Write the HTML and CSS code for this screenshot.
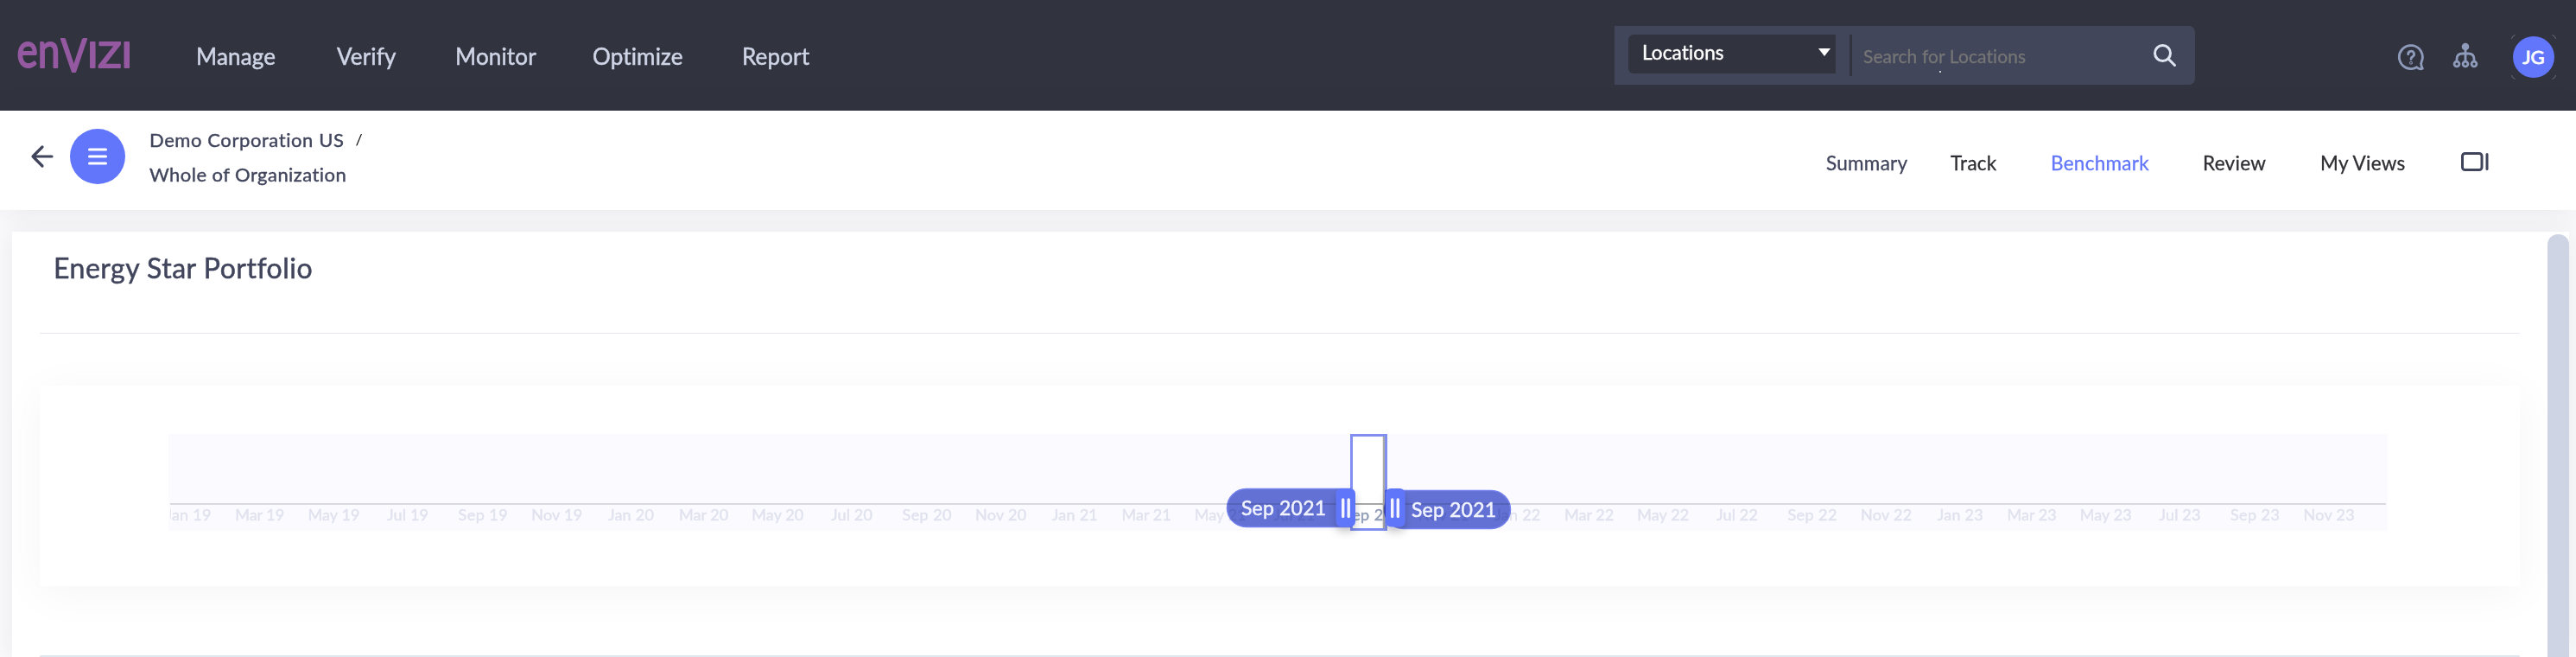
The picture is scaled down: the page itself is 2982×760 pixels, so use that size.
FILE: index.html
```html
<!DOCTYPE html>
<html lang="en">
<head>
<meta charset="utf-8">
<title>Envizi</title>
<link rel="stylesheet" href="styles.css">
</head>
<body>
<header class="topbar">
  <svg class="logo" width="140" height="60" viewBox="14 36 140 60" role="img">
    <text x="19.500" y="78" font-size="56" textLength="50" lengthAdjust="spacingAndGlyphs">en</text>
    <text x="70.500" y="82.500" font-size="53" textLength="30" lengthAdjust="spacingAndGlyphs">V</text>
    <text x="101" y="78" font-size="40" textLength="52" lengthAdjust="spacingAndGlyphs">IZI</text>
  </svg>
  <nav class="mainnav">
    <a>Manage</a><a>Verify</a><a>Monitor</a><a>Optimize</a><a>Report</a>
  </nav>
  <div class="search">
    <div class="select"><span>Locations</span><svg width="14" height="9" viewBox="0 0 14 9"><path d="M0 0h14L7 9z" fill="#fff"/></svg></div>
    <div class="divider"></div>
    <div class="query">Search for Locations<i class="speck"></i></div>
    <svg class="glass" width="28" height="28" viewBox="0 0 28 28" fill="none" stroke="#dfe4f0" stroke-width="3" stroke-linecap="round"><circle cx="11.500" cy="11.500" r="9"/><path d="M18 18l7.500 7.500"/></svg>
  </div>
  <div class="tools">
    <svg class="help" width="32" height="32" viewBox="0 0 32 32" fill="none" stroke="#8e9bba" stroke-width="2.800" stroke-linecap="round" stroke-linejoin="round"><path d="M22.500 27.800A13.500 13.500 0 1 1 28.200 21.500C27 24.500 28 27 29.300 29.200C27 30.500 24.500 29.500 22.500 27.800"/><path d="M12.700 12.800a3.400 3.400 0 1 1 5.200 2.700c-1.500 1-1.900 1.500-1.900 2.900"/><circle cx="16" cy="22.700" r=".5"/></svg>
    <svg class="tree" width="30" height="30" viewBox="0 0 30 30" fill="none" stroke="#8e9bba" stroke-width="2.800"><circle cx="15" cy="5" r="4.300" fill="#8e9bba" stroke="none"/><path d="M15 5v16M5 21v-1.500q0-6.500 6.500-6.500h7q6.500 0 6.500 6.500v1.500"/><g fill="#31333f"><circle cx="5" cy="25" r="2.900"/><circle cx="15" cy="25" r="2.900"/><circle cx="25" cy="25" r="2.900"/></g></svg>
    <div class="avatar">JG<svg class="corners" width="52" height="52" viewBox="0 0 52 52" fill="none" stroke="#6b6d78"><path d="M.5 5q0-3 4-4.500M47.500.5q4 1.500 4 4.500M51.500 47q0 3-4 4.500M4.500 51.500q-4-1.500-4-4.500"/></svg></div>
  </div>
</header>
<section class="subbar">
  <svg class="back" width="28" height="28" viewBox="0 0 28 28" fill="none" stroke="#41455c" stroke-width="3.200" stroke-linecap="round" stroke-linejoin="round"><path d="M25 14H3M14 3L3 14l11 11"/></svg>
  <button class="menu"><svg width="24" height="20" viewBox="0 0 24 20" stroke="#fff" stroke-width="3" stroke-linecap="round"><path d="M2.500 2h19M2.500 10h19M2.500 18h19"/></svg></button>
  <div class="crumbs"><div><span class="c1">Demo Corporation US</span><span class="slash">/</span></div><div><span class="c2">Whole of Organization</span></div></div>
  <nav class="tabs"><a class="navy">Summary</a><a>Track</a><a class="active">Benchmark</a><a>Review</a><a>My Views</a></nav>
  <svg class="panelicon" width="34" height="24" viewBox="0 0 34 24" fill="none" stroke="#41455c" stroke-width="3"><rect x="2.500" y="2.500" width="22.500" height="19" rx="3"/><path d="M31 3.500v17" stroke-linecap="round"/></svg>
</section>
<main class="panel">
  <div class="content">
    <h1>Energy Star Portfolio</h1>
    <div class="card">
      <svg class="timeline" width="2569" height="112" viewBox="195 502 2569 112">
        <defs>
          <clipPath id="plot"><rect x="197" y="502" width="2567" height="112"/></clipPath>
          <filter id="shadow" x="-60%" y="-40%" width="220%" height="190%"><feDropShadow dx="0" dy="6" stdDeviation="5" flood-color="#000" flood-opacity=".2"/></filter>
        </defs>
        <rect x="195" y="502" width="2569" height="112" fill="#fafaff"/>
        <path d="M197 583H2762" stroke="#d9d9e0" stroke-width="2"/>
        <g class="months" clip-path="url(#plot)" id="months"></g>
        <rect x="1564.500" y="503.500" width="39.500" height="109" fill="#fff"/>
        <path d="M1566 583H1602" stroke="#8a8a8a" stroke-width="1.500"/>
        <path d="M1602 505V611" stroke="#a9a9a9" stroke-width="2.500"/>
        <svg x="1569" y="585" width="32" height="26" viewBox="1569 585 32 26"><text class="inner" x="1583.500" y="601.500" textLength="57" text-anchor="middle">Sep 21</text></svg>
        <rect x="1564.500" y="503.500" width="40" height="109" fill="none" stroke="#8190f0" stroke-width="3"/>
        <g class="pill">
          <path d="M1563 565.500H1442.500a22 22 0 0 0 0 44H1563z"/>
          <path d="M1604 567.500H1726.500a22 22 0 0 1 0 44H1624.500a22 22 0 0 1-20.500-30z"/>
        </g>
        <g class="value"><text x="1437" y="596" textLength="98">Sep 2021</text><text x="1634" y="598" textLength="98">Sep 2021</text></g>
        <g filter="url(#shadow)" fill="#6176fa"><rect x="1546.700" y="565" width="22.300" height="44.500" rx="6"/><rect x="1604" y="565" width="22.500" height="44.500" rx="6"/></g>
        <path d="M1554.700 578v19.500M1561.200 578v19.500M1611.700 578v19.500M1618.300 578v19.500" stroke="#f4f5ff" stroke-width="3.400" stroke-linecap="round"/>
      </svg>
    </div>
    <div class="nextcard"></div>
  </div>
  <div class="track"><div class="thumb"></div></div>
</main>
<script src="timeline.js"></script>
</body>
</html>
```
FILE: styles.css
```css
* { box-sizing: border-box; }
body { margin: 0; height: 760px; overflow: hidden; background: #fafafc; font-family: Lato, "Noto Sans", sans-serif; display: flex; flex-direction: column; }
.topbar { height: 128px; flex: none; background: #31333f; display: flex; align-items: flex-start; }
.logo { margin: 36px 0 0 14px; flex: none; fill: #9459a0; stroke: #9459a0; stroke-width: 1.9; stroke-linejoin: round; overflow: visible; }
.mainnav { margin: 49px 0 0 73px; width: 1642px; display: grid; grid-template-columns: 163px 137px 159px 173px 1fr; font-size: 26px; line-height: 33px; letter-spacing: .15px; color: #cfd5e6; -webkit-text-stroke: .5px; }
.search { margin-top: 30px; width: 672px; height: 68px; background: #42465a; border-radius: 0 7px 7px 0; display: flex; padding: 10px 21px 0 16px; }
.select { width: 240px; height: 45px; background: #31333f; border-radius: 6px 0 0 6px; padding: 0 6px 4px 16px; display: flex; align-items: center; justify-content: space-between; color: #fff; font-size: 22.5px; line-height: 40px; letter-spacing: .1px; -webkit-text-stroke: .4px; }
.divider { width: 3px; height: 48px; background: #31333f; margin-left: 16px; }
.query { position: relative; margin: 11px 0 0 13px; width: 335px; color: #757575; font-size: 21px; line-height: 28px; letter-spacing: .1px; -webkit-text-stroke: .3px; }
.speck { position: absolute; left: 88px; top: 31px; width: 2px; height: 2px; background: #c9c9c9; }
.glass { margin-top: 10px; flex: none; }
.tools { margin-left: 234px; display: flex; }
.help { margin-top: 50px; }
.tree { margin: 49px 0 0 32px; }
.avatar { position: relative; margin: 42px 0 0 40px; width: 48px; height: 48px; border-radius: 50%; background: #6176fa; color: #fff; font-size: 22px; line-height: 48px; text-align: center; -webkit-text-stroke: .8px; }
.corners { position: absolute; left: -2px; top: -2px; }
.subbar { height: 115px; flex: none; position: relative; background: #fff; display: flex; align-items: flex-start; box-shadow: 0 0 30px rgba(40,42,60,.09); }
.back { margin: 39px 0 0 35px; }
.menu { margin: 21px 0 0 18px; width: 64px; height: 64px; border: 0; border-radius: 50%; background: #6176fa; padding: 0; display: flex; align-items: center; justify-content: center; }
.crumbs { margin: 14px 0 0 28px; width: 1941px; font-size: 22px; line-height: 39px; color: #41455c; -webkit-text-stroke: .4px; }
.c1 { letter-spacing: .58px; }
.c2 { letter-spacing: .45px; }
.crumbs div + div { margin-top: -1px; }
.slash { color: #111; font-size: 18px; margin-left: 13px; position: relative; top: -2px; -webkit-text-stroke: 0; }
.tabs { margin-top: 45px; width: 734px; display: grid; grid-template-columns: 144px 116px 176px 136px 1fr; font-size: 22.5px; line-height: 32px; letter-spacing: .28px; color: #2e2e33; -webkit-text-stroke: .3px; }
.tabs .navy { color: #41455c; }
.tabs .active { color: #6176fa; }
.panelicon { margin-top: 47px; }
.panel { margin: 25px 8px 0 14px; flex: 1; min-height: 0; background: #fff; display: flex; box-shadow: 0 0 30px rgba(40,42,60,.08); }
.content { width: 2935px; padding: 0 32px; display: flex; flex-direction: column; }
h1 { margin: 0; height: 118px; flex: none; padding: 21px 0 0 16px; border-bottom: 1px solid #e6e7f1; font-size: 32px; line-height: 42px; font-weight: 400; letter-spacing: .5px; color: #41455c; -webkit-text-stroke: .5px; }
.card { margin-top: 60px; height: 232px; flex: none; padding: 56px 149px; box-shadow: 0 8px 50px rgba(0,0,0,.045); }
.timeline { display: block; overflow: visible; }
.timeline text { font-size: 18px; }
.months text { fill: #e0e2ee; stroke: #e0e2ee; stroke-width: .4px; }
.timeline .inner { fill: #8d9ab6; stroke: #8d9ab6; stroke-width: .4px; }
.pill { mix-blend-mode: multiply; }
.pill path { fill: #6473d3; stroke: #7684ee; stroke-width: 1.5px; }
.timeline .value text { font-size: 23px; fill: #f1f3ff; stroke: #f1f3ff; stroke-width: .5px; }
.nextcard { margin-top: 80px; flex: 1; border: 2px solid #e1e7ee; border-bottom: 0; border-radius: 4px 4px 0 0; }
.track { width: 25px; padding-top: 3px; display: flex; }
.thumb { flex: 1; border-radius: 12px 12px 0 0; background: #ced4e3; }
```
FILE: timeline.js
```js
const names = ["Jan", "Mar", "May", "Jul", "Sep", "Nov"];
const widths = { Jan: 53, Mar: 57, May: 60, Jul: 48, Sep: 57, Nov: 59 };
const origin = Date.UTC(2019, 2, 1);
const selected = "Sep 21";
const group = document.getElementById("months");
for (let year = 19; year <= 23; year++) {
  names.forEach((name, i) => {
    if (`${name} ${year}` === selected) return;
    const days = (Date.UTC(2000 + year, i * 2, 1) - origin) / 864e5;
    const label = document.createElementNS("http://www.w3.org/2000/svg", "text");
    label.setAttribute("x", (300.7 + days * 1.4041).toFixed(1));
    label.setAttribute("y", "601.5");
    label.setAttribute("text-anchor", "middle");
    label.setAttribute("textLength", widths[name]);
    label.textContent = `${name} ${year}`;
    group.append(label);
  });
}
```
